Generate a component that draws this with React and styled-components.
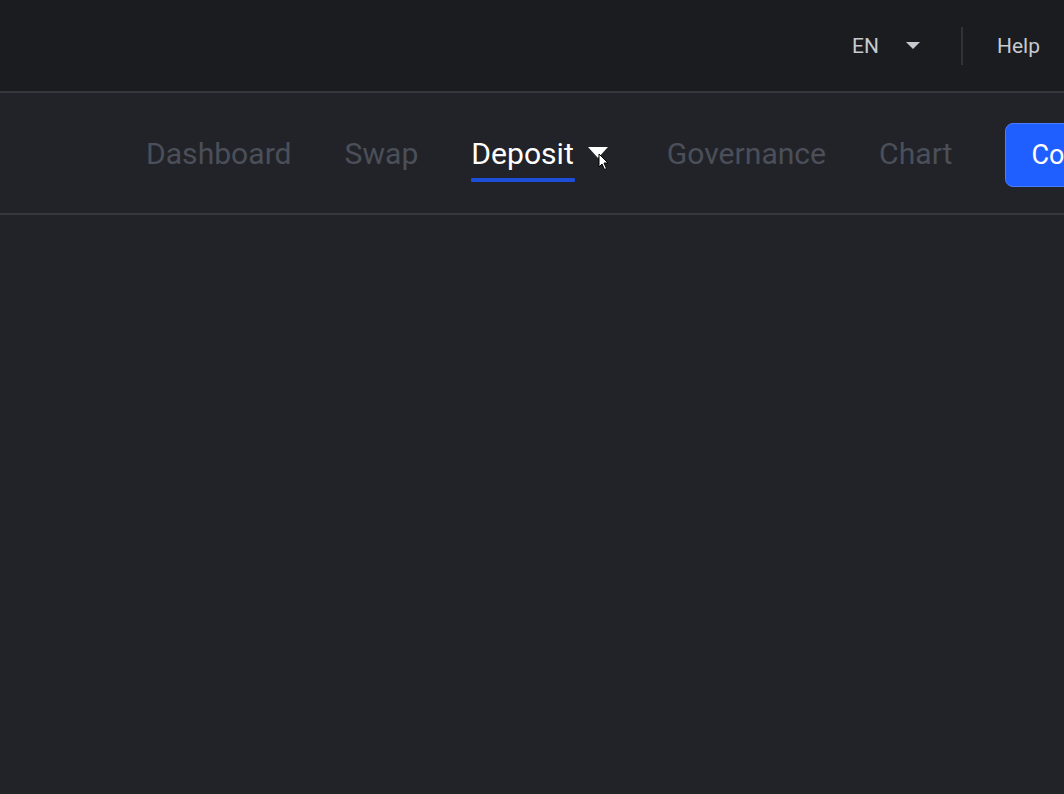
import React from "react";
import styled, { createGlobalStyle } from "styled-components";

const Global = createGlobalStyle`
  html, body { margin: 0; padding: 0; background: #222328; overflow: hidden; }
  body { font-family: Roboto, "Liberation Sans", sans-serif; }
`;

const Page = styled.div`
  width: 1064px;
  height: 794px;
  background: #222328;
  overflow: hidden;
`;

const TopBar = styled.header`
  height: 91px;
  background: #1a1c1f;
  border-bottom: 2px solid #34383c;
  display: flex;
  align-items: center;
  justify-content: flex-end;
  padding-right: 24px;
  box-sizing: content-box;
`;

const TopItem = styled.div`
  display: flex;
  align-items: center;
  color: #c6c9d0;
  font-size: 21px;
  gap: 27px;
`;

const Divider = styled.div`
  width: 2px;
  height: 38px;
  background: #303338;
  margin: 0 34px 0 41px;
`;

const NavBar = styled.nav`
  height: 120px;
  border-bottom: 2px solid #34383c;
  display: flex;
  align-items: center;
  padding-left: 146px;
  gap: 53px;
  white-space: nowrap;
`;

const NavItem = styled.div`
  position: relative;
  font-size: 30.1px;
  font-weight: 400;
  color: ${(p) => (p.$active ? "#ffffff" : "#4a4f59")};
  display: flex;
  align-items: center;
  gap: 14px;
  padding-right: ${(p) => (p.$dropdown ? "6px" : "0")};
`;

const Label = styled.span`
  position: relative;
  &::after {
    content: "";
    display: ${(p) => (p.$active ? "block" : "none")};
    position: absolute;
    left: 0;
    right: -1px;
    bottom: -11px;
    height: 4px;
    border-radius: 1px;
    background: #1d4ed8;
  }
`;

const CaretWrap = styled.span`
  position: relative;
  display: inline-flex;
  width: 20px;
  height: 11px;
  margin-top: -2px;
`;

const Cursor = styled.svg`
  position: absolute;
  left: 10px;
  top: 6px;
`;

const ConnectButton = styled.button`
  height: 64px;
  padding: 0 25px;
  background: #1f5eff;
  border: 1px solid #4b7dff;
  border-radius: 8px;
  color: #fff;
  font-family: Roboto, "Liberation Sans", sans-serif;
  font-size: 27px;
  flex-shrink: 0;
  margin-top: 3px;
`;

function Caret({ w = 14, h = 8, color = "#fff" }) {
  return (
    <svg width={w} height={h} viewBox="0 0 20 11" preserveAspectRatio="none">
      <path d="M0 0 L20 0 L10 11 Z" fill={color} />
    </svg>
  );
}

export default function App() {
  return (
    <Page>
      <Global />
      <TopBar>
        <TopItem>
          EN
          <Caret w={14} h={7} color="#c6c9d0" />
        </TopItem>
        <Divider />
        <TopItem>Help</TopItem>
      </TopBar>
      <NavBar>
        <NavItem>Dashboard</NavItem>
        <NavItem>Swap</NavItem>
        <NavItem $active $dropdown>
          <Label $active>Deposit</Label>
          <CaretWrap>
            <Caret w={20} h={11} />
            <Cursor width="12" height="18" viewBox="0 0 12 18">
              <path d="M1 1 L1 14 L4 11 L6.5 16.5 L8.5 15.5 L6 10 L10 10 Z" fill="#fff" stroke="#000" strokeWidth="1" />
            </Cursor>
          </CaretWrap>
        </NavItem>
        <NavItem>Governance</NavItem>
        <NavItem>Chart</NavItem>
        <ConnectButton>Connect Wallet</ConnectButton>
      </NavBar>
    </Page>
  );
}
